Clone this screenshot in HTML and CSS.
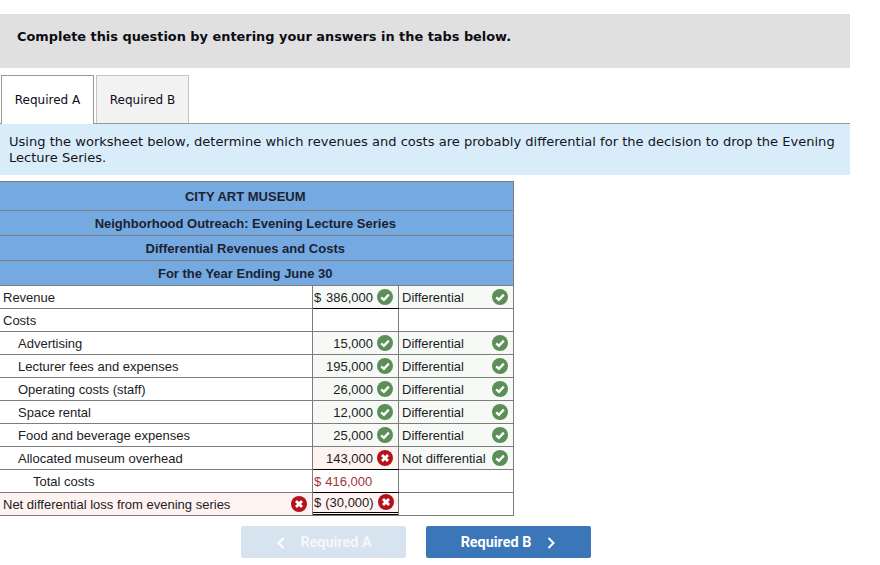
FILE: index.html
```html
<!DOCTYPE html>
<html lang="en">
<head>
<meta charset="utf-8">
<title>Required A</title>
<link rel="stylesheet" href="styles.css">
</head>
<body>
<svg class="defs" width="0" height="0" aria-hidden="true">
  <symbol id="ok" viewBox="0 0 16 16">
    <circle cx="8" cy="8" r="8" fill="#5b8f57"/>
    <path d="M4.2 8.4 6.9 10.9 11.8 5.6" fill="none" stroke="#fff" stroke-width="2.3"/>
  </symbol>
  <symbol id="bad" viewBox="0 0 16 16">
    <circle cx="8" cy="8" r="8" fill="#b3121a"/>
    <path d="M5 5 11 11M11 5 5 11" fill="none" stroke="#fff" stroke-width="2.8"/>
  </symbol>
</svg>
<main class="page">
  <div class="notice">Complete this question by entering your answers in the tabs below.</div>
  <div class="tabs">
    <div class="tab tab-active">Required A</div>
    <div class="tab tab-idle">Required B</div>
  </div>
  <p class="prompt">Using the worksheet below, determine which revenues and costs are probably differential for the decision to drop the Evening Lecture Series.</p>
  <table class="sheet">
    <colgroup><col class="c1"><col class="c2"><col class="c3"></colgroup>
    <thead>
      <tr class="h1"><th colspan="3">CITY ART MUSEUM</th></tr>
      <tr class="h2"><th colspan="3">Neighborhood Outreach: Evening Lecture Series</th></tr>
      <tr class="h2"><th colspan="3">Differential Revenues and Costs</th></tr>
      <tr class="h2"><th colspan="3">For the Year Ending June 30</th></tr>
    </thead>
    <tbody>
      <tr>
        <td class="label">Revenue</td>
        <td class="amt good under"><div class="fill"><span>$</span><span class="push">386,000</span><svg class="ico"><use href="#ok"/></svg></div></td>
        <td class="cls good"><div class="fill"><span>Differential</span><svg class="ico"><use href="#ok"/></svg></div></td>
      </tr>
      <tr><td class="label">Costs</td><td class="amt"></td><td class="cls"></td></tr>
      <tr>
        <td class="label ind">Advertising</td>
        <td class="amt good"><div class="fill"><span class="push">15,000</span><svg class="ico"><use href="#ok"/></svg></div></td>
        <td class="cls good"><div class="fill"><span>Differential</span><svg class="ico"><use href="#ok"/></svg></div></td>
      </tr>
      <tr>
        <td class="label ind">Lecturer fees and expenses</td>
        <td class="amt good"><div class="fill"><span class="push">195,000</span><svg class="ico"><use href="#ok"/></svg></div></td>
        <td class="cls good"><div class="fill"><span>Differential</span><svg class="ico"><use href="#ok"/></svg></div></td>
      </tr>
      <tr>
        <td class="label ind">Operating costs (staff)</td>
        <td class="amt good"><div class="fill"><span class="push">26,000</span><svg class="ico"><use href="#ok"/></svg></div></td>
        <td class="cls good"><div class="fill"><span>Differential</span><svg class="ico"><use href="#ok"/></svg></div></td>
      </tr>
      <tr>
        <td class="label ind">Space rental</td>
        <td class="amt good"><div class="fill"><span class="push">12,000</span><svg class="ico"><use href="#ok"/></svg></div></td>
        <td class="cls good"><div class="fill"><span>Differential</span><svg class="ico"><use href="#ok"/></svg></div></td>
      </tr>
      <tr>
        <td class="label ind">Food and beverage expenses</td>
        <td class="amt good"><div class="fill"><span class="push">25,000</span><svg class="ico"><use href="#ok"/></svg></div></td>
        <td class="cls good"><div class="fill"><span>Differential</span><svg class="ico"><use href="#ok"/></svg></div></td>
      </tr>
      <tr>
        <td class="label ind">Allocated museum overhead</td>
        <td class="amt wrong under"><div class="fill"><span class="push">143,000</span><svg class="ico"><use href="#bad"/></svg></div></td>
        <td class="cls good"><div class="fill"><span>Not differential</span><svg class="ico"><use href="#ok"/></svg></div></td>
      </tr>
      <tr>
        <td class="label ind2">Total costs</td>
        <td class="amt under red"><div class="fill"><span>$</span><span class="gap">416,000</span></div></td>
        <td class="cls"></td>
      </tr>
      <tr>
        <td class="label wrong"><div class="fill"><span>Net differential loss from evening series</span><svg class="ico ico-end"><use href="#bad"/></svg></div></td>
        <td class="amt wrong double"><div class="fill"><span>$</span><span class="paren">(30,000)</span><svg class="ico"><use href="#bad"/></svg></div></td>
        <td class="cls"></td>
      </tr>
    </tbody>
  </table>
  <nav class="pager">
    <div class="btn btn-off"><svg class="chev chev-l" viewBox="0 0 8 12"><path d="M6.5 1 1.5 6l5 5" fill="none" stroke="#fff" stroke-width="2"/></svg>Required A</div>
    <div class="btn btn-on">Required B<svg class="chev chev-r" viewBox="0 0 8 12"><path d="M1.5 1l5 5-5 5" fill="none" stroke="#fff" stroke-width="2"/></svg></div>
  </nav>
</main>
</body>
</html>
```

FILE: styles.css
```css
* { box-sizing: border-box; }
html, body { margin: 0; padding: 0; background: #fff; }
.defs { display: block; height: 0; }
.page { width: 880px; padding-top: 14px; color: #1a1a1a; }

.notice {
  width: 850px;
  height: 54px;
  padding: 14px 17px 0;
  background: #e0e0e0;
  font: bold 12.9px/17px "DejaVu Sans", Verdana, sans-serif;
  color: #0c0c14;
}

.tabs { display: flex; gap: 2px; height: 48px; margin-top: 7px; padding-left: 1px; width: 850px; }
.tab {
  width: 93px;
  padding-top: 16px;
  font: 12px/16px "DejaVu Sans", Verdana, sans-serif;
  text-align: center;
  color: #0c0c14;
}
.tab-active { background: #fff; border: 1px solid #999; border-bottom: 0; position: relative; z-index: 1; height: 49px; }
.tab-idle { background: #f2f2f2; border: 1px solid #c4c4c4; border-bottom: 0; }

.prompt {
  width: 850px;
  height: 52px;
  margin: 0;
  padding: 10px 9px 0;
  background: #d9ecfa;
  border-top: 1px solid #999;
  font: 13.05px/16px "DejaVu Sans", Verdana, sans-serif;
  color: #141420;
}

.sheet {
  width: 513px;
  margin-top: 6px;
  table-layout: fixed;
  border-collapse: collapse;
  font: 13px/16px "Liberation Sans", Arial, sans-serif;
  color: #1c1c24;
}
.c1 { width: 312.5px; }
.c2 { width: 86px; }
.c3 { width: 114.5px; }
.sheet th {
  background: #74a9e2;
  border: 1px solid #7d7d7d;
  border-left-width: 0;
  padding: 1px 22px 0 0;
  text-align: center;
  font-weight: bold;
  color: #1c2230;
}
.h1 { height: 29px; }
.h2 { height: 25px; }
.sheet tbody tr { height: 23px; }
.sheet td {
  border: 1px solid #7d7d7d;
  padding: 1px 0 0;
  vertical-align: middle;
  height: 23px;
}
.sheet td.label { border-left: 0; padding-left: 3px; }
.sheet td.ind { padding-left: 18px; }
.sheet td.ind2 { padding-left: 33px; }
.sheet td.amt { padding: 1px 5px 0 1px; }
.sheet td.cls { padding: 1px 5px 0 3px; }
.fill { display: flex; align-items: center; height: 21px; }
.push { margin-left: auto; }
.gap { margin-left: 4px; }
.paren { margin-left: 4px; }
.ico { width: 16px; height: 16px; margin: 0 0 2px 4px; flex: none; }
.cls .ico { margin-left: auto; }
.sheet td.label.wrong { padding-right: 5px; }
.ico-end { margin-left: auto; }
.good { background: #f6f9f5; }
.wrong { background: #fff3f1; }
.under { border-bottom: 1px solid #000 !important; }
.red { color: #a8323a; }
.sheet td.double { border-top: 1px solid #000; padding: 0; }
.double .fill { border-bottom: 3px double #000; height: 22px; padding: 0 5px 0 1px; }

.pager { display: flex; justify-content: center; gap: 20px; width: 832px; margin-top: 10px; }
.btn {
  display: flex;
  align-items: center;
  justify-content: center;
  width: 165px;
  height: 32px;
  padding-top: 1px;
  border-radius: 2px;
  font: bold 14.4px/16px Roboto, "Liberation Sans", sans-serif;
  color: #fff;
}
.btn-on { background: #3a76b8; padding-right: 1px; }
.btn-off { background: #d8e3f0; color: #f4f7fb; padding-left: 2px; }
.chev { width: 8px; height: 12px; flex: none; }
.chev-l { margin-right: 15px; }
.chev-r { margin-left: 16px; }
```
